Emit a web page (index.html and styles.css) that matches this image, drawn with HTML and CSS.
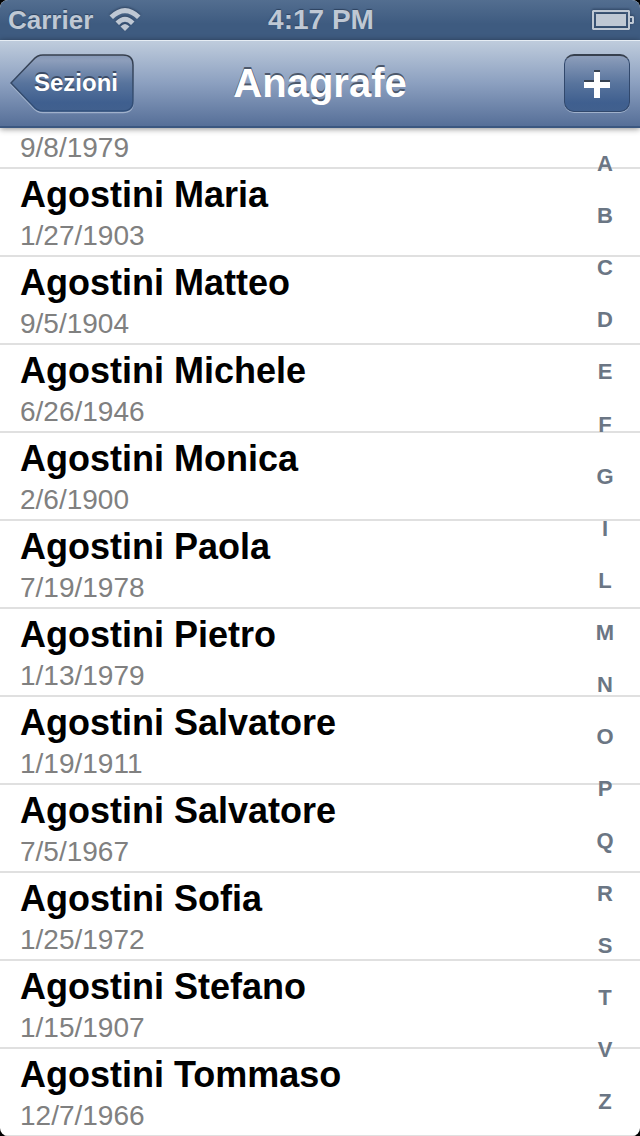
FILE: index.html
```html
<!DOCTYPE html>
<html lang="it">
<head>
  <meta charset="UTF-8" />
  <meta name="viewport" content="width=device-width, initial-scale=1" />
  <title>Anagrafe</title>
  <link rel="stylesheet" href="styles.css">
</head>
<body>
  <div class="app">

    <!-- Barra di stato -->
    <div class="status-bar">
      <div class="status-left">
        <span class="carrier">Carrier</span>
        <svg class="wifi" width="32" height="24" viewBox="0 0 32 24" aria-hidden="true">
          <path d="M0.5 7.5 Q16 -7.5 31.5 7.5 L28 11 Q16 -0.5 4 11 Z" />
          <path d="M6.5 13.5 Q16 4 25.5 13.5 L22 17 Q16 10.5 10 17 Z" />
          <path d="M11.5 18.5 Q16 13.5 20.5 18.5 L16 23 Z" />
        </svg>
      </div>
      <span class="clock">4:17 PM</span>
      <div class="status-right">
        <svg class="battery" width="42" height="20" viewBox="0 0 42 20" aria-hidden="true">
          <path fill-rule="evenodd" d="M1 0H37L38 1V6H41L42 7V13L41 14H38V19L37 20H1L0 19V1Z M2 2V18H36V2Z M38 8V12H40V8Z" />
          <rect x="4" y="4" width="30" height="12" />
        </svg>
      </div>
    </div>

    <!-- Barra di navigazione -->
    <header class="nav-bar">
      <div class="nav-side">
        <button type="button" class="back-button">
          <svg class="back-shape" width="124" height="60" viewBox="0 0 124 60" aria-hidden="true">
            <defs>
              <linearGradient id="backFill" x1="0" y1="0" x2="0" y2="1">
                <stop offset="0" stop-color="#8698b6" />
                <stop offset="0.1" stop-color="#8d9ebb" />
                <stop offset="0.5" stop-color="#58749d" />
                <stop offset="0.85" stop-color="#3f5f8f" />
                <stop offset="1" stop-color="#41608e" />
              </linearGradient>
              <linearGradient id="backEdge" x1="0" y1="0" x2="0" y2="1">
                <stop offset="0" stop-color="#37404e" />
                <stop offset="1" stop-color="#31507c" />
              </linearGradient>
            </defs>
            <path transform="translate(0 1.5)" fill="none" stroke="#a0b1cb" stroke-width="1.5" d="M33 1H113Q123 1 123 11V47Q123 57 113 57H33Q27 57 23 52L1 29L23 6Q27 1 33 1Z" />
            <path fill="url(#backFill)" stroke="url(#backEdge)" stroke-width="1.5" d="M33 1H113Q123 1 123 11V47Q123 57 113 57H33Q27 57 23 52L1 29L23 6Q27 1 33 1Z" />
          </svg>
          <span class="back-label">Sezioni</span>
        </button>
      </div>
      <h1>Anagrafe</h1>
      <div class="nav-side nav-side-right">
        <button type="button" class="add-button" aria-label="Aggiungi">
          <svg width="26" height="28" viewBox="0 0 26 28" aria-hidden="true">
            <path fill="#384352" d="M10 0H16V10H26V18H16V26H10V18H0V10H10Z" />
            <path fill="#fff" d="M10 2H16V12H26V18H16V28H10V18H0V12H10Z" />
          </svg>
        </button>
      </div>
    </header>

    <main class="content">
      <ul class="people">
        <li><span class="date">9/8/1979</span></li>
        <li><span class="name">Agostini Maria</span><span class="date">1/27/1903</span></li>
        <li><span class="name">Agostini Matteo</span><span class="date">9/5/1904</span></li>
        <li><span class="name">Agostini Michele</span><span class="date">6/26/1946</span></li>
        <li><span class="name">Agostini Monica</span><span class="date">2/6/1900</span></li>
        <li><span class="name">Agostini Paola</span><span class="date">7/19/1978</span></li>
        <li><span class="name">Agostini Pietro</span><span class="date">1/13/1979</span></li>
        <li><span class="name">Agostini Salvatore</span><span class="date">1/19/1911</span></li>
        <li><span class="name">Agostini Salvatore</span><span class="date">7/5/1967</span></li>
        <li><span class="name">Agostini Sofia</span><span class="date">1/25/1972</span></li>
        <li><span class="name">Agostini Stefano</span><span class="date">1/15/1907</span></li>
        <li><span class="name">Agostini Tommaso</span><span class="date">12/7/1966</span></li>
      </ul>

      <!-- Indice alfabetico sopra la lista -->
      <nav class="index" aria-label="Indice">
        <a href="#A">A</a>
        <a href="#B">B</a>
        <a href="#C">C</a>
        <a href="#D">D</a>
        <a href="#E">E</a>
        <a href="#F">F</a>
        <a href="#G">G</a>
        <a href="#I">I</a>
        <a href="#L">L</a>
        <a href="#M">M</a>
        <a href="#N">N</a>
        <a href="#O">O</a>
        <a href="#P">P</a>
        <a href="#Q">Q</a>
        <a href="#R">R</a>
        <a href="#S">S</a>
        <a href="#T">T</a>
        <a href="#V">V</a>
        <a href="#Z">Z</a>
      </nav>
    </main>

  </div>
</body>
</html>
```
FILE: styles.css
```css
* {
  box-sizing: border-box;
}

body {
  margin: 0;
  background: #000;
  font-family: "Liberation Sans", Arial, sans-serif;
}

.app {
  display: flex;
  flex-direction: column;
  height: 100vh;
  background: #fff;
  border-radius: 8px;
  overflow: hidden;
}

/* Barra di stato */
.status-bar {
  display: flex;
  align-items: center;
  flex-shrink: 0;
  height: 40px;
  padding: 0 6px 0 8px;
  background: linear-gradient(#536e90, #3e5b80 60%, #3e5b80);
  color: #bfc8d4;
  font-weight: bold;
  text-shadow: 0 -1px 1px #2d425f;
}

.status-left,
.status-right {
  display: flex;
  align-items: center;
  flex: 1;
}

.status-left {
  gap: 16px;
}

.status-right {
  justify-content: flex-end;
}

.carrier {
  font-size: 26px;
}

.clock {
  font-size: 28px;
}

.wifi,
.battery {
  fill: #bfc8d4;
  filter: drop-shadow(0 -1px 1px #2d425f);
}

/* Barra di navigazione */
.nav-bar {
  display: flex;
  align-items: center;
  flex-shrink: 0;
  position: relative;
  z-index: 1;
  height: 88px;
  padding: 0 10px;
  background: linear-gradient(#c0cddd, #8ca0c0 50%, #566f98);
  border-bottom: 2px solid #3b5780;
  box-shadow: inset 0 1px 0 #e6edf4, 0 1px 6px rgba(0, 0, 0, 0.45);
}

.nav-bar h1 {
  margin: 0;
  color: #fff;
  font-size: 40px;
  line-height: 48px;
  text-shadow: 0 -2px 0 #4c586b;
}

.nav-side {
  display: flex;
  flex: 1;
}

.nav-side-right {
  justify-content: flex-end;
}

.back-button {
  position: relative;
  width: 124px;
  height: 58px;
  padding: 0 17px 0 24px;
  border: 0;
  background: none;
  color: #fff;
  font: bold 24px "Liberation Sans", Arial, sans-serif;
  text-align: right;
  text-shadow: 0 -2px 0 #3c4c66;
}

.back-shape {
  position: absolute;
  top: 0;
  left: 0;
}

.back-label {
  position: relative;
}

.add-button {
  display: flex;
  align-items: center;
  justify-content: center;
  width: 66px;
  height: 58px;
  padding: 0;
  border: 1px solid #31486c;
  border-top: 2px solid #37404e;
  border-radius: 10px;
  background: linear-gradient(#8d9ebb, #58749d 50%, #3f5f8f 85%, #41608e);
  box-shadow: 0 1px 0 #a0b1cb;
}

/* Lista */
.content {
  flex: 1;
  min-height: 0;
  position: relative;
  overflow: hidden;
}

.people {
  margin: 0;
  padding: 0;
  list-style: none;
}

.people li {
  display: flex;
  flex-direction: column;
  justify-content: flex-end;
  height: 88px;
  padding: 0 20px;
  border-bottom: 2px solid #e0e0e0;
}

/* la prima riga è a metà dello scorrimento */
.people li:first-child {
  height: 41px;
}

.name {
  color: #000;
  font-size: 36px;
  font-weight: bold;
  line-height: 44px;
}

.date {
  color: #808080;
  font-size: 28px;
  line-height: 38px;
}

.index {
  position: absolute;
  top: 0;
  right: 10px;
  bottom: 0;
  display: flex;
  flex-direction: column;
  width: 50px;
  padding: 10px 0 8px;
}

.index a {
  display: flex;
  flex: 1;
  align-items: center;
  justify-content: center;
  color: #6b7684;
  font-size: 22px;
  font-weight: bold;
  text-decoration: none;
}
```
